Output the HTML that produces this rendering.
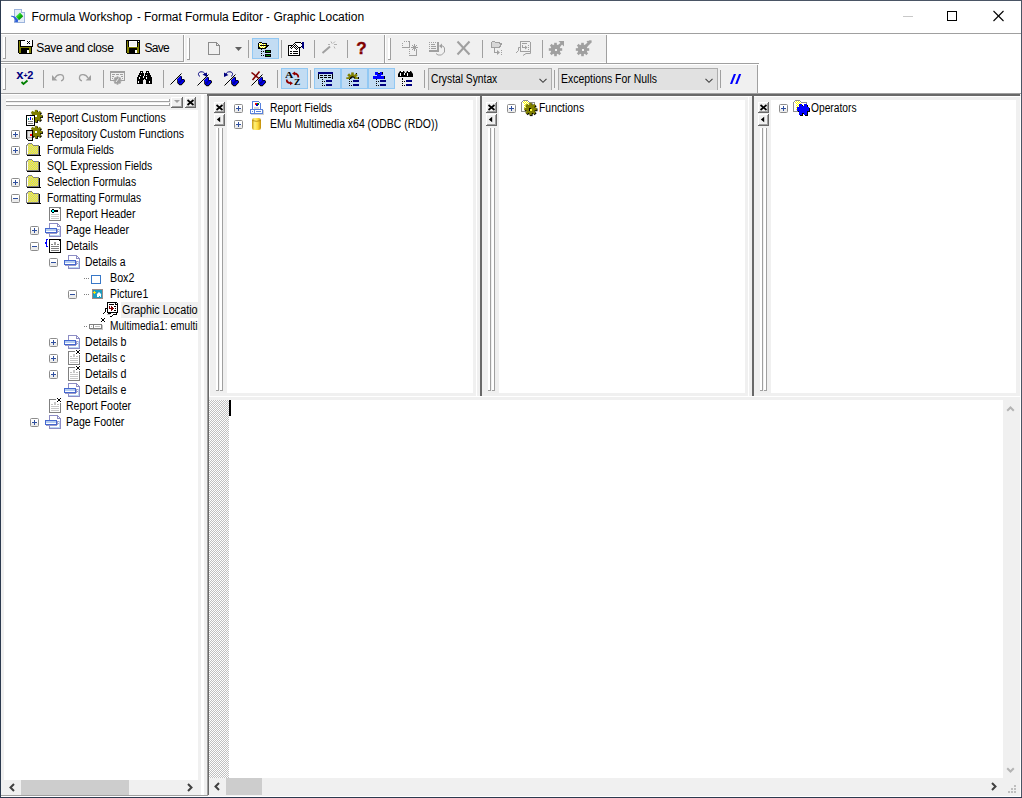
<!DOCTYPE html>
<html><head><meta charset="utf-8"><title>Formula Workshop</title>
<style>
*{box-sizing:border-box;margin:0;padding:0}
html,body{width:1022px;height:798px;overflow:hidden;background:#fff}
body{position:relative;font-family:"Liberation Sans",sans-serif;font-size:11px;color:#000}
.a{position:absolute}
.t{position:absolute;white-space:nowrap;line-height:16px;height:16px}
.g{background:#f0f0f0}
.w{background:#fff}
.d{background:#696969}
.m{background:#a0a0a0}
svg{position:absolute;overflow:visible;shape-rendering:crispEdges}
</style></head><body>
<div class="a w" style="left:0px;top:0px;width:1022px;height:33px;"></div>
<div class="t" style="left:31.50px;top:9px;font-size:12px;letter-spacing:-0.013px;">Formula Workshop</div>
<div class="t" style="left:144.10px;top:9px;font-size:12px;letter-spacing:-0.060px;">Format Formula Editor</div>
<div class="t" style="left:136.60px;top:9px;font-size:12px;transform:scaleX(0.9500);transform-origin:0 0;">-</div>
<div class="t" style="left:266.40px;top:9px;font-size:12px;transform:scaleX(0.9250);transform-origin:0 0;">-</div>
<div class="t" style="left:273.50px;top:9px;font-size:12px;letter-spacing:-0.007px;">Graphic Location</div>
<div class="a m" style="left:1px;top:33px;width:1020px;height:1px;"></div>
<div class="a g" style="left:1px;top:34px;width:605px;height:29px;"></div>
<div class="a g" style="left:1px;top:63px;width:756px;height:30px;"></div>
<div class="a w" style="left:1px;top:34px;width:1020px;height:1px;"></div>
<div class="a m" style="left:1px;top:61px;width:183px;height:1px;"></div>
<div class="a w" style="left:1px;top:62px;width:183px;height:1px;"></div>
<div class="a m" style="left:183px;top:35px;width:1px;height:27px;"></div>
<div class="a w" style="left:184px;top:35px;width:1px;height:28px;"></div>
<div class="a w" style="left:185px;top:62px;width:421px;height:1px;"></div>
<div class="a m" style="left:384px;top:35px;width:1px;height:28px;"></div>
<div class="a w" style="left:385px;top:35px;width:1px;height:28px;"></div>
<div class="a m" style="left:606px;top:35px;width:1px;height:29px;"></div>
<div class="a m" style="left:1px;top:63px;width:758px;height:1px;"></div>
<div class="a w" style="left:1px;top:64px;width:756px;height:1px;"></div>
<div class="a m" style="left:757px;top:65px;width:1px;height:28px;"></div>
<div class="a m" style="left:1px;top:93px;width:1020px;height:1px;"></div>
<div class="a w" style="left:1px;top:94px;width:206px;height:1px;"></div>
<div class="a w" style="left:3px;top:37px;width:2px;height:22px;"></div>
<div class="a m" style="left:5px;top:37px;width:1px;height:22px;"></div>
<div class="a m" style="left:3px;top:58px;width:3px;height:1px;"></div>
<div class="a w" style="left:187px;top:38px;width:2px;height:22px;"></div>
<div class="a m" style="left:189px;top:38px;width:1px;height:22px;"></div>
<div class="a m" style="left:187px;top:59px;width:3px;height:1px;"></div>
<div class="a w" style="left:388px;top:38px;width:2px;height:22px;"></div>
<div class="a m" style="left:390px;top:38px;width:1px;height:22px;"></div>
<div class="a m" style="left:388px;top:59px;width:3px;height:1px;"></div>
<div class="a w" style="left:3px;top:68px;width:2px;height:22px;"></div>
<div class="a m" style="left:5px;top:68px;width:1px;height:22px;"></div>
<div class="a m" style="left:3px;top:89px;width:3px;height:1px;"></div>
<div class="a m" style="left:248px;top:40px;width:1px;height:18px;"></div>
<div class="a m" style="left:281px;top:40px;width:1px;height:18px;"></div>
<div class="a m" style="left:314px;top:40px;width:1px;height:18px;"></div>
<div class="a m" style="left:347px;top:40px;width:1px;height:18px;"></div>
<div class="a m" style="left:482px;top:40px;width:1px;height:18px;"></div>
<div class="a m" style="left:542px;top:40px;width:1px;height:18px;"></div>
<div class="a m" style="left:43px;top:70px;width:1px;height:18px;"></div>
<div class="a m" style="left:103px;top:70px;width:1px;height:18px;"></div>
<div class="a m" style="left:163px;top:70px;width:1px;height:18px;"></div>
<div class="a m" style="left:277px;top:70px;width:1px;height:18px;"></div>
<div class="a m" style="left:310px;top:70px;width:1px;height:18px;"></div>
<div class="a m" style="left:424px;top:70px;width:1px;height:18px;"></div>
<div class="a m" style="left:554px;top:70px;width:1px;height:18px;"></div>
<div class="a m" style="left:720px;top:70px;width:1px;height:18px;"></div>
<div class="a " style="left:252px;top:38px;width:27px;height:21px;background:#c2dcf3;border:1px solid #92c8f3"></div>
<div class="a " style="left:281px;top:68px;width:27px;height:21px;background:#c2dcf3;border:1px solid #92c8f3"></div>
<div class="a " style="left:314px;top:68px;width:27px;height:21px;background:#c2dcf3;border:1px solid #92c8f3"></div>
<div class="a " style="left:341px;top:68px;width:27px;height:21px;background:#c2dcf3;border:1px solid #92c8f3"></div>
<div class="a " style="left:368px;top:68px;width:27px;height:21px;background:#c2dcf3;border:1px solid #92c8f3"></div>
<div class="t" style="left:36.30px;top:40px;font-size:12px;letter-spacing:-0.338px;">Save and close</div>
<div class="t" style="left:144.60px;top:40px;font-size:12px;letter-spacing:-0.767px;">Save</div>
<div class="a " style="left:428px;top:68px;width:124px;height:22px;background:#e1e1e1;border:1px solid #adadad;border-bottom:none"></div>
<div class="a " style="left:558px;top:68px;width:160px;height:22px;background:#e1e1e1;border:1px solid #adadad;border-bottom:none"></div>
<div class="t" style="left:431.14px;top:71px;font-size:12px;transform:scaleX(0.8566);transform-origin:0 0;">Crystal Syntax</div>
<div class="t" style="left:561.43px;top:71px;font-size:12px;transform:scaleX(0.8725);transform-origin:0 0;">Exceptions For Nulls</div>
<div class="a g" style="left:1px;top:95px;width:1020px;height:701px;"></div>
<div class="a w" style="left:4px;top:110px;width:194px;height:670px;"></div>
<div class="a w" style="left:201px;top:95px;width:3px;height:700px;"></div>
<div class="a m" style="left:207px;top:94px;width:1px;height:701px;"></div>
<div class="a d" style="left:208px;top:94px;width:1px;height:701px;"></div>
<div class="a d" style="left:207px;top:94px;width:813px;height:2px;"></div>
<div class="a w" style="left:209px;top:96px;width:1px;height:300px;"></div>
<div class="a w" style="left:209px;top:96px;width:811px;height:1px;"></div>
<div class="a w" style="left:476px;top:97px;width:1px;height:299px;"></div>
<div class="a w" style="left:748px;top:97px;width:1px;height:299px;"></div>
<div class="a w" style="left:227px;top:100px;width:246px;height:293px;"></div>
<div class="a w" style="left:499px;top:100px;width:246px;height:293px;"></div>
<div class="a w" style="left:771px;top:100px;width:245px;height:293px;"></div>
<div class="a d" style="left:480px;top:96px;width:2px;height:300px;"></div>
<div class="a d" style="left:752px;top:96px;width:2px;height:300px;"></div>
<div class="a w" style="left:209px;top:396px;width:811px;height:1px;"></div>
<div class="t" style="left:269.73px;top:100px;font-size:12px;transform:scaleX(0.8700);transform-origin:0 0;">Report Fields</div>
<div class="t" style="left:269.73px;top:116px;font-size:12px;transform:scaleX(0.8712);transform-origin:0 0;">EMu Multimedia x64 (ODBC (RDO))</div>
<div class="t" style="left:538.93px;top:100px;font-size:12px;transform:scaleX(0.8667);transform-origin:0 0;">Functions</div>
<div class="t" style="left:810.80px;top:100px;font-size:12px;transform:scaleX(0.8528);transform-origin:0 0;">Operators</div>
<div class="a w" style="left:209px;top:400px;width:794px;height:378px;"></div>
<div class="a " style="left:209px;top:400px;width:20px;height:378px;background:conic-gradient(#fff 25%,#c0c0c0 0 50%,#fff 0 75%,#c0c0c0 0) 0 0/2px 2px"></div>
<div class="a " style="left:229px;top:400px;width:2px;height:16px;background:#000"></div>
<div class="a" style="left:0;top:110px;width:198px;height:670px;overflow:hidden">
<div class="a g" style="left:121px;top:192px;width:77px;height:16px;"></div>
<div class="t" style="left:46.63px;top:0px;font-size:12px;transform:scaleX(0.8719);transform-origin:0 0;">Report Custom Functions</div>
<div class="t" style="left:46.63px;top:16px;font-size:12px;transform:scaleX(0.8699);transform-origin:0 0;">Repository Custom Functions</div>
<div class="t" style="left:46.66px;top:32px;font-size:12px;transform:scaleX(0.8423);transform-origin:0 0;">Formula Fields</div>
<div class="t" style="left:46.63px;top:48px;font-size:12px;transform:scaleX(0.8658);transform-origin:0 0;">SQL Expression Fields</div>
<div class="t" style="left:46.63px;top:64px;font-size:12px;transform:scaleX(0.8673);transform-origin:0 0;">Selection Formulas</div>
<div class="t" style="left:46.65px;top:80px;font-size:12px;transform:scaleX(0.8505);transform-origin:0 0;">Formatting Formulas</div>
<div class="t" style="left:65.72px;top:96px;font-size:12px;transform:scaleX(0.8833);transform-origin:0 0;">Report Header</div>
<div class="t" style="left:65.71px;top:112px;font-size:12px;transform:scaleX(0.8900);transform-origin:0 0;">Page Header</div>
<div class="t" style="left:65.73px;top:128px;font-size:12px;transform:scaleX(0.8714);transform-origin:0 0;">Details</div>
<div class="t" style="left:84.53px;top:144px;font-size:12px;transform:scaleX(0.8674);transform-origin:0 0;">Details a</div>
<div class="t" style="left:109.81px;top:160px;font-size:12px;transform:scaleX(0.8923);transform-origin:0 0;">Box2</div>
<div class="t" style="left:109.83px;top:176px;font-size:12px;transform:scaleX(0.8674);transform-origin:0 0;">Picture1</div>
<div class="t" style="left:121.70px;top:192px;font-size:12px;transform:scaleX(0.8988);transform-origin:0 0;">Graphic Location</div>
<div class="t" style="left:110.35px;top:208px;font-size:12px;transform:scaleX(0.8471);transform-origin:0 0;">Multimedia1: emultimedia.Multimedia</div>
<div class="t" style="left:84.51px;top:224px;font-size:12px;transform:scaleX(0.8867);transform-origin:0 0;">Details b</div>
<div class="t" style="left:84.52px;top:240px;font-size:12px;transform:scaleX(0.8778);transform-origin:0 0;">Details c</div>
<div class="t" style="left:84.51px;top:256px;font-size:12px;transform:scaleX(0.8867);transform-origin:0 0;">Details d</div>
<div class="t" style="left:84.51px;top:272px;font-size:12px;transform:scaleX(0.8867);transform-origin:0 0;">Details e</div>
<div class="t" style="left:65.62px;top:288px;font-size:12px;transform:scaleX(0.8795);transform-origin:0 0;">Report Footer</div>
<div class="t" style="left:65.62px;top:304px;font-size:12px;transform:scaleX(0.8831);transform-origin:0 0;">Page Footer</div>
</div>
<div class="a " style="left:0px;top:0px;width:1022px;height:1px;background:#4a5565"></div>
<div class="a " style="left:0px;top:0px;width:1px;height:798px;background:#2c3a4f"></div>
<div class="a " style="left:1021px;top:0px;width:1px;height:798px;background:#4a5565"></div>
<div class="a " style="left:0px;top:797px;width:1022px;height:1px;background:#2c3a4f"></div>
<div class="a w" style="left:1px;top:796px;width:1020px;height:1px;"></div>
<div class="a w" style="left:1020px;top:96px;width:1px;height:700px;"></div>
<div class="a m" style="left:1px;top:795px;width:207px;height:1px;"></div>
<div class="t" style="left:356px;top:39px;width:11px;text-align:center;font-size:17px;line-height:20px;height:20px;font-weight:bold;color:#800000;-webkit-text-stroke:0.4px #800000">?</div>
<div class="t" style="left:16.3px;top:67px;font-size:11px;font-weight:bold;color:#000080;letter-spacing:0;line-height:16px"><span style="font-size:13px">x</span><span style="font-size:7px;vertical-align:1.5px;letter-spacing:-0.5px">+</span>2</div>
<div class="t" style="left:285.2px;top:70.3px;font-family:'Liberation Serif',serif;font-weight:bold;font-size:8.5px;line-height:10px;height:10px;transform:scaleX(1.35);transform-origin:0 0">A</div>
<div class="t" style="left:294px;top:76.7px;font-family:'Liberation Serif',serif;font-weight:bold;font-size:8.5px;line-height:10px;height:10px;transform:scaleX(1.12);transform-origin:0 0">Z</div>
<svg width="1022" height="798" viewBox="0 0 1022 798" style="left:0;top:0">
<defs><clipPath id="hc"><rect x="345" y="71" width="15" height="8"/></clipPath><pattern id="ck" width="2" height="2" patternUnits="userSpaceOnUse"><rect width="2" height="2" fill="#ffff00"/><rect x="0" y="0" width="1" height="1" fill="#c0c0c0"/><rect x="1" y="1" width="1" height="1" fill="#c0c0c0"/></pattern><pattern id="ckk" width="2" height="2" patternUnits="userSpaceOnUse"><rect width="2" height="2" fill="#fff"/><rect x="0" y="0" width="1" height="1" fill="#000"/><rect x="1" y="1" width="1" height="1" fill="#000"/></pattern><pattern id="ckw" width="2" height="2" patternUnits="userSpaceOnUse"><rect width="2" height="2" fill="#ffff00"/><rect x="0" y="0" width="1" height="1" fill="#fff"/><rect x="1" y="1" width="1" height="1" fill="#fff"/></pattern><linearGradient id="grn" x1="0" y1="0" x2="1" y2="1"><stop offset="0.2" stop-color="#58e858"/><stop offset="0.5" stop-color="#10c010"/><stop offset="0.9" stop-color="#007800"/></linearGradient><linearGradient id="gold" x1="0" x2="1"><stop offset="0" stop-color="#c89810"/><stop offset="0.3" stop-color="#fff27a"/><stop offset="0.65" stop-color="#ffd93a"/><stop offset="1" stop-color="#c08c08"/></linearGradient></defs>
<polyline points="539.5,78.8 543,82.3 546.5,78.8" fill="none" stroke="#404040" stroke-width="1.1" shape-rendering="geometricPrecision"/>
<polyline points="705.5,78.8 709,82.3 712.5,78.8" fill="none" stroke="#404040" stroke-width="1.1" shape-rendering="geometricPrecision"/>
<rect x="126" y="40" width="14" height="14" fill="#000"/>
<rect x="126" y="53" width="1" height="1" fill="#f0f0f0"/>
<rect x="127" y="41" width="1" height="12" fill="#808000"/>
<rect x="128" y="47" width="1" height="6" fill="#808000"/>
<rect x="127" y="47" width="12" height="1" fill="#808000"/>
<rect x="138" y="43" width="1" height="10" fill="#808000"/>
<rect x="137" y="47" width="1" height="6" fill="#808000"/>
<rect x="129" y="41" width="8" height="6" fill="#fff"/>
<rect x="130" y="42" width="6" height="4" fill="#f0f0f0"/>
<rect x="138" y="41" width="1" height="1" fill="#fff"/>
<rect x="135" y="50" width="2" height="3" fill="#fff"/>
<rect x="18" y="40" width="15" height="14" fill="#000"/>
<rect x="18" y="53" width="1" height="1" fill="#f0f0f0"/>
<rect x="19" y="41" width="1" height="12" fill="#808000"/>
<rect x="20" y="47" width="1" height="6" fill="#808000"/>
<rect x="19" y="47" width="12" height="1" fill="#808000"/>
<rect x="30" y="47" width="1" height="6" fill="#808000"/>
<rect x="29" y="47" width="1" height="6" fill="#808000"/>
<rect x="32" y="47" width="1" height="7" fill="#f0f0f0"/>
<rect x="21" y="41" width="4" height="5" fill="#fff"/>
<rect x="25" y="40" width="7" height="6" fill="#fff"/>
<rect x="31" y="46" width="2" height="1" fill="#000"/>
<rect x="27" y="50" width="2" height="3" fill="#fff"/>
<polyline points="27,41 30,44" fill="none" stroke="#000" stroke-width="1" shape-rendering="geometricPrecision"/>
<polyline points="30,41 27,44" fill="none" stroke="#000" stroke-width="1" shape-rendering="geometricPrecision"/>
<rect x="27" y="41" width="1" height="1" fill="#000"/>
<rect x="29" y="41" width="1" height="1" fill="#000"/>
<rect x="28" y="42" width="1" height="1" fill="#000"/>
<rect x="27" y="43" width="1" height="1" fill="#000"/>
<rect x="29" y="43" width="1" height="1" fill="#000"/>
<path d="M208.5,42.5 H216.5 L219.5,45.5 V54.5 H208.5 Z" fill="none" stroke="#8c8c8c" stroke-width="1" />
<path d="M216.5,42.5 V45.5 H219.5" fill="none" stroke="#8c8c8c" stroke-width="1" />
<polygon points="235,47 242,47 238.5,51" fill="#606060" shape-rendering="geometricPrecision"/>
<rect x="259" y="43" width="3" height="1" fill="url(#ckw)"/>
<rect x="259" y="44" width="7" height="1" fill="url(#ckw)"/>
<rect x="259" y="45" width="1" height="1" fill="url(#ckw)"/>
<rect x="259" y="46" width="7" height="1" fill="url(#ckw)"/>
<rect x="259" y="47" width="6" height="1" fill="url(#ckw)"/>
<rect x="259" y="42" width="3" height="1" fill="#000"/>
<rect x="258" y="43" width="1" height="6" fill="#000"/>
<rect x="262" y="43" width="5" height="1" fill="#000"/>
<rect x="266" y="44" width="1" height="1" fill="#000"/>
<rect x="260" y="45" width="9" height="1" fill="#000"/>
<rect x="266" y="46" width="2" height="1" fill="#000"/>
<rect x="265" y="47" width="2" height="1" fill="#000"/>
<rect x="258" y="48" width="8" height="1" fill="#000"/>
<rect x="261" y="49" width="1" height="1" fill="#000"/>
<rect x="259" y="47" width="1" height="1" fill="#000"/>
<rect x="261" y="51" width="1" height="1" fill="#000"/>
<rect x="261" y="53" width="1" height="1" fill="#000"/>
<rect x="261" y="55" width="1" height="1" fill="#000"/>
<rect x="263" y="51" width="1" height="1" fill="#000"/>
<rect x="263" y="55" width="1" height="1" fill="#000"/>
<rect x="265" y="50" width="6" height="3" fill="#000"/>
<rect x="266" y="51" width="4" height="1" fill="#008000"/>
<rect x="265" y="54" width="6" height="3" fill="#000"/>
<rect x="266" y="55" width="4" height="1" fill="#008000"/>
<rect x="288" y="45" width="12" height="11" fill="#000"/>
<rect x="289" y="46" width="10" height="9" fill="#fff"/>
<rect x="290" y="51" width="2" height="1" fill="#000"/>
<rect x="293" y="51" width="5" height="1" fill="#000"/>
<rect x="290" y="53" width="2" height="1" fill="#000"/>
<rect x="293" y="53" width="5" height="1" fill="#000"/>
<rect x="294" y="43" width="1" height="1" fill="#fff"/>
<rect x="294" y="43" width="1" height="1" fill="#000"/>
<rect x="293" y="44" width="3" height="1" fill="#fff"/>
<rect x="293" y="44" width="1" height="1" fill="#000"/>
<rect x="295" y="44" width="1" height="1" fill="#000"/>
<rect x="292" y="45" width="5" height="1" fill="#fff"/>
<rect x="292" y="45" width="1" height="1" fill="#000"/>
<rect x="294" y="45" width="1" height="1" fill="#000"/>
<rect x="296" y="45" width="1" height="1" fill="#000"/>
<rect x="291" y="46" width="7" height="1" fill="#fff"/>
<rect x="291" y="46" width="1" height="1" fill="#000"/>
<rect x="293" y="46" width="1" height="1" fill="#000"/>
<rect x="295" y="46" width="1" height="1" fill="#000"/>
<rect x="297" y="46" width="1" height="1" fill="#000"/>
<rect x="290" y="47" width="9" height="1" fill="#fff"/>
<rect x="290" y="47" width="1" height="1" fill="#000"/>
<rect x="292" y="47" width="1" height="1" fill="#000"/>
<rect x="294" y="47" width="1" height="1" fill="#000"/>
<rect x="296" y="47" width="1" height="1" fill="#000"/>
<rect x="298" y="47" width="1" height="1" fill="#000"/>
<rect x="294" y="48" width="4" height="1" fill="#fff"/>
<rect x="295" y="49" width="3" height="1" fill="#fff"/>
<rect x="291" y="48" width="1" height="1" fill="#000"/>
<rect x="295" y="48" width="1" height="1" fill="#000"/>
<rect x="297" y="48" width="1" height="1" fill="#000"/>
<rect x="296" y="49" width="1" height="1" fill="#000"/>
<rect x="296" y="43" width="6" height="4" fill="#fff"/>
<rect x="295" y="44" width="1" height="1" fill="#000"/>
<rect x="296" y="45" width="1" height="1" fill="#000"/>
<rect x="295" y="46" width="1" height="1" fill="#000"/>
<rect x="297" y="46" width="1" height="1" fill="#000"/>
<rect x="295" y="42" width="6" height="1" fill="#000"/>
<rect x="298" y="47" width="3" height="1" fill="#000"/>
<rect x="301" y="43" width="1" height="1" fill="#000"/>
<rect x="301" y="46" width="1" height="1" fill="#000"/>
<rect x="302" y="42" width="2" height="6" fill="#000080"/>
<rect x="303" y="48" width="1" height="1" fill="#000080"/>
<polyline points="322.5,53 330,46.5" fill="none" stroke="#a0a0a0" stroke-width="2" shape-rendering="geometricPrecision"/>
<polyline points="331,41.5 332,43.5" fill="none" stroke="#b0b0b0" stroke-width="1" shape-rendering="geometricPrecision"/>
<polyline points="335,41.5 333,43.5" fill="none" stroke="#b0b0b0" stroke-width="1" shape-rendering="geometricPrecision"/>
<polyline points="328,44.5 330,44.5" fill="none" stroke="#b0b0b0" stroke-width="1" shape-rendering="geometricPrecision"/>
<polyline points="334,44.5 337,44.5" fill="none" stroke="#b0b0b0" stroke-width="1" shape-rendering="geometricPrecision"/>
<polyline points="334,46.5 335,48.5" fill="none" stroke="#b0b0b0" stroke-width="1" shape-rendering="geometricPrecision"/>
<polyline points="331.5,46.5 331.5,46.5" fill="none" stroke="#b0b0b0" stroke-width="1" shape-rendering="geometricPrecision"/>
<rect x="404" y="41" width="1" height="1" fill="#a0a0a0"/>
<rect x="406" y="41" width="1" height="1" fill="#a0a0a0"/>
<rect x="408" y="41" width="1" height="1" fill="#a0a0a0"/>
<rect x="402" y="43" width="1" height="1" fill="#a0a0a0"/>
<rect x="402" y="45" width="1" height="1" fill="#a0a0a0"/>
<rect x="402" y="47" width="8" height="1" fill="#a0a0a0"/>
<rect x="409" y="41" width="1" height="7" fill="#a0a0a0"/>
<rect x="409" y="49" width="1" height="1" fill="#a0a0a0"/>
<rect x="409" y="51" width="1" height="1" fill="#a0a0a0"/>
<rect x="409" y="53" width="1" height="1" fill="#a0a0a0"/>
<rect x="409" y="55" width="8" height="1" fill="#a0a0a0"/>
<rect x="416" y="49" width="1" height="7" fill="#a0a0a0"/>
<rect x="414" y="44" width="1" height="7" fill="#a0a0a0"/>
<rect x="411" y="47" width="7" height="1" fill="#a0a0a0"/>
<polyline points="412,45 417,50" fill="none" stroke="#a0a0a0" stroke-width="1" shape-rendering="geometricPrecision"/>
<polyline points="417,45 412,50" fill="none" stroke="#a0a0a0" stroke-width="1" shape-rendering="geometricPrecision"/>
<rect x="429" y="42" width="1" height="1" fill="#a0a0a0"/>
<rect x="431" y="42" width="1" height="1" fill="#a0a0a0"/>
<rect x="433" y="42" width="1" height="1" fill="#a0a0a0"/>
<rect x="435" y="42" width="1" height="1" fill="#a0a0a0"/>
<rect x="429" y="44" width="1" height="1" fill="#a0a0a0"/>
<rect x="429" y="46" width="1" height="1" fill="#a0a0a0"/>
<rect x="429" y="48" width="1" height="1" fill="#a0a0a0"/>
<rect x="431" y="44" width="4" height="1" fill="#a0a0a0"/>
<rect x="431" y="46" width="5" height="1" fill="#a0a0a0"/>
<rect x="431" y="48" width="5" height="1" fill="#a0a0a0"/>
<rect x="437" y="42" width="2" height="10" fill="#a0a0a0"/>
<rect x="429" y="50" width="10" height="2" fill="#a0a0a0"/>
<path d="M440.5,46 L443,46 L444.5,48 V52 L441.5,55 H438 L436,53.5" fill="none" stroke="#a0a0a0" stroke-width="1" shape-rendering="geometricPrecision"/>
<polygon points="439,46 442,43.5 442,48.5" fill="#a0a0a0" shape-rendering="geometricPrecision"/>
<polyline points="457.5,41.5 469.5,54.5" fill="none" stroke="#a0a0a0" stroke-width="2" shape-rendering="geometricPrecision"/>
<polyline points="469.5,41.5 457.5,54.5" fill="none" stroke="#a0a0a0" stroke-width="2" shape-rendering="geometricPrecision"/>
<path d="M491.5,47.5 V42.5 L492.5,41.5 H494.5 L495.5,42.5 H499.5 V43.5 H501.5 L499.5,47.5 Z" fill="#d8d8d8" stroke="#a0a0a0" stroke-width="1" />
<polyline points="494.5,48 494.5,52.5 498,52.5" fill="none" stroke="#a0a0a0" stroke-width="1" />
<polygon points="497,50 500,52.5 497,55" fill="#a0a0a0" shape-rendering="geometricPrecision"/>
<rect x="501" y="50" width="1" height="1" fill="#a0a0a0"/>
<rect x="501" y="52" width="1" height="1" fill="#a0a0a0"/>
<rect x="501" y="54" width="1" height="1" fill="#a0a0a0"/>
<path d="M520.5,41.5 H529.5 L530.5,42.5 V51.5 H520.5 Z" fill="none" stroke="#a0a0a0" stroke-width="1" />
<rect x="522" y="43" width="5" height="1" fill="#a0a0a0"/>
<polyline points="522.5,45 522.5,47.5 525,47.5" fill="none" stroke="#a0a0a0" stroke-width="1" />
<polygon points="525,45.5 527.5,47.5 525,49.5" fill="#a0a0a0" shape-rendering="geometricPrecision"/>
<rect x="528" y="45" width="1" height="1" fill="#a0a0a0"/>
<rect x="528" y="47" width="1" height="1" fill="#a0a0a0"/>
<rect x="528" y="49" width="1" height="1" fill="#a0a0a0"/>
<polyline points="516,53 518.5,50.5 518.5,47.5 520,47.5" fill="none" stroke="#a0a0a0" stroke-width="1" shape-rendering="geometricPrecision"/>
<polyline points="530.5,52 530.5,53.5 526,53.5 523,55.5" fill="none" stroke="#a0a0a0" stroke-width="1" shape-rendering="geometricPrecision"/>
<circle cx="555.5" cy="49.5" r="4.9" fill="#a0a0a0" shape-rendering="geometricPrecision"/>
<rect x="554.2" y="42.800000000000004" width="2.6" height="2.9" fill="#a0a0a0" transform="rotate(0.0 555.5 49.5)" shape-rendering="geometricPrecision"/>
<rect x="554.2" y="42.800000000000004" width="2.6" height="2.9" fill="#a0a0a0" transform="rotate(45.0 555.5 49.5)" shape-rendering="geometricPrecision"/>
<rect x="554.2" y="42.800000000000004" width="2.6" height="2.9" fill="#a0a0a0" transform="rotate(90.0 555.5 49.5)" shape-rendering="geometricPrecision"/>
<rect x="554.2" y="42.800000000000004" width="2.6" height="2.9" fill="#a0a0a0" transform="rotate(135.0 555.5 49.5)" shape-rendering="geometricPrecision"/>
<rect x="554.2" y="42.800000000000004" width="2.6" height="2.9" fill="#a0a0a0" transform="rotate(180.0 555.5 49.5)" shape-rendering="geometricPrecision"/>
<rect x="554.2" y="42.800000000000004" width="2.6" height="2.9" fill="#a0a0a0" transform="rotate(225.0 555.5 49.5)" shape-rendering="geometricPrecision"/>
<rect x="554.2" y="42.800000000000004" width="2.6" height="2.9" fill="#a0a0a0" transform="rotate(270.0 555.5 49.5)" shape-rendering="geometricPrecision"/>
<rect x="554.2" y="42.800000000000004" width="2.6" height="2.9" fill="#a0a0a0" transform="rotate(315.0 555.5 49.5)" shape-rendering="geometricPrecision"/>
<rect x="554.5" y="48.5" width="2" height="2" fill="#f0f0f0"/>
<polyline points="558,47 563,42" fill="none" stroke="#a0a0a0" stroke-width="2.4" shape-rendering="geometricPrecision"/>
<polygon points="558.5,41 564,41 564,46.5" fill="#a0a0a0" shape-rendering="geometricPrecision"/>
<circle cx="582.5" cy="49.5" r="4.9" fill="#a0a0a0" shape-rendering="geometricPrecision"/>
<rect x="581.2" y="42.800000000000004" width="2.6" height="2.9" fill="#a0a0a0" transform="rotate(0.0 582.5 49.5)" shape-rendering="geometricPrecision"/>
<rect x="581.2" y="42.800000000000004" width="2.6" height="2.9" fill="#a0a0a0" transform="rotate(45.0 582.5 49.5)" shape-rendering="geometricPrecision"/>
<rect x="581.2" y="42.800000000000004" width="2.6" height="2.9" fill="#a0a0a0" transform="rotate(90.0 582.5 49.5)" shape-rendering="geometricPrecision"/>
<rect x="581.2" y="42.800000000000004" width="2.6" height="2.9" fill="#a0a0a0" transform="rotate(135.0 582.5 49.5)" shape-rendering="geometricPrecision"/>
<rect x="581.2" y="42.800000000000004" width="2.6" height="2.9" fill="#a0a0a0" transform="rotate(180.0 582.5 49.5)" shape-rendering="geometricPrecision"/>
<rect x="581.2" y="42.800000000000004" width="2.6" height="2.9" fill="#a0a0a0" transform="rotate(225.0 582.5 49.5)" shape-rendering="geometricPrecision"/>
<rect x="581.2" y="42.800000000000004" width="2.6" height="2.9" fill="#a0a0a0" transform="rotate(270.0 582.5 49.5)" shape-rendering="geometricPrecision"/>
<rect x="581.2" y="42.800000000000004" width="2.6" height="2.9" fill="#a0a0a0" transform="rotate(315.0 582.5 49.5)" shape-rendering="geometricPrecision"/>
<rect x="581.5" y="48.5" width="2" height="2" fill="#f0f0f0"/>
<polyline points="585,47 591,41" fill="none" stroke="#a0a0a0" stroke-width="2.8" shape-rendering="geometricPrecision"/>
<polygon points="586.5,41 592,40.5 589,44.5" fill="#a0a0a0" shape-rendering="geometricPrecision"/>
<polyline points="21.5,82 23.5,84 27.5,80.5" fill="none" stroke="#008000" stroke-width="1.8" shape-rendering="geometricPrecision"/>
<polygon points="52,75 52,80.4 57.4,80.4" fill="#a0a0a0" shape-rendering="geometricPrecision"/>
<path d="M55,78 C57,74 63,73.5 63.5,77 C63.8,79 62.5,80.5 61,80.8" fill="none" stroke="#a0a0a0" stroke-width="1.3" shape-rendering="geometricPrecision"/>
<polygon points="91,75 91,80.4 85.6,80.4" fill="#a0a0a0" shape-rendering="geometricPrecision"/>
<path d="M88,78 C86,74 80,73.5 79.5,77 C79.2,79 80.5,80.5 82,80.8" fill="none" stroke="#a0a0a0" stroke-width="1.3" shape-rendering="geometricPrecision"/>
<rect x="110" y="71" width="15" height="2" fill="#a0a0a0"/>
<rect x="110" y="71" width="1" height="10" fill="#a0a0a0"/>
<rect x="124" y="71" width="1" height="10" fill="#a0a0a0"/>
<rect x="110" y="80" width="4" height="1" fill="#a0a0a0"/>
<rect x="121" y="80" width="4" height="1" fill="#a0a0a0"/>
<rect x="112" y="74" width="3" height="1" fill="#a0a0a0"/>
<rect x="116" y="74" width="3" height="1" fill="#a0a0a0"/>
<rect x="120" y="74" width="3" height="1" fill="#a0a0a0"/>
<rect x="112" y="76" width="2" height="1" fill="#a0a0a0"/>
<rect x="121" y="76" width="2" height="1" fill="#a0a0a0"/>
<rect x="112" y="78" width="1" height="1" fill="#a0a0a0"/>
<rect x="122" y="78" width="1" height="1" fill="#a0a0a0"/>
<circle cx="117.5" cy="80.5" r="3.2" fill="#a0a0a0" shape-rendering="geometricPrecision"/>
<rect x="116.6" y="76.3" width="1.8" height="2.1" fill="#a0a0a0" transform="rotate(0.0 117.5 80.5)" shape-rendering="geometricPrecision"/>
<rect x="116.6" y="76.3" width="1.8" height="2.1" fill="#a0a0a0" transform="rotate(45.0 117.5 80.5)" shape-rendering="geometricPrecision"/>
<rect x="116.6" y="76.3" width="1.8" height="2.1" fill="#a0a0a0" transform="rotate(90.0 117.5 80.5)" shape-rendering="geometricPrecision"/>
<rect x="116.6" y="76.3" width="1.8" height="2.1" fill="#a0a0a0" transform="rotate(135.0 117.5 80.5)" shape-rendering="geometricPrecision"/>
<rect x="116.6" y="76.3" width="1.8" height="2.1" fill="#a0a0a0" transform="rotate(180.0 117.5 80.5)" shape-rendering="geometricPrecision"/>
<rect x="116.6" y="76.3" width="1.8" height="2.1" fill="#a0a0a0" transform="rotate(225.0 117.5 80.5)" shape-rendering="geometricPrecision"/>
<rect x="116.6" y="76.3" width="1.8" height="2.1" fill="#a0a0a0" transform="rotate(270.0 117.5 80.5)" shape-rendering="geometricPrecision"/>
<rect x="116.6" y="76.3" width="1.8" height="2.1" fill="#a0a0a0" transform="rotate(315.0 117.5 80.5)" shape-rendering="geometricPrecision"/>
<polyline points="116,82 118.5,78.5" fill="none" stroke="#f0f0f0" stroke-width="1" shape-rendering="geometricPrecision"/>
<rect x="140" y="71" width="3" height="2" fill="#000"/>
<rect x="146" y="71" width="3" height="2" fill="#000"/>
<rect x="139" y="73" width="5" height="2" fill="#000"/>
<rect x="145" y="73" width="5" height="2" fill="#000"/>
<rect x="138" y="75" width="6" height="2" fill="#000"/>
<rect x="145" y="75" width="6" height="2" fill="#000"/>
<rect x="137" y="77" width="15" height="3" fill="#000"/>
<rect x="144" y="76" width="1" height="1" fill="#000"/>
<rect x="137" y="80" width="6" height="4" fill="#000"/>
<rect x="146" y="80" width="6" height="4" fill="#000"/>
<rect x="141" y="72" width="1" height="1" fill="#fff"/>
<rect x="147" y="72" width="1" height="1" fill="#fff"/>
<rect x="140" y="75" width="1" height="1" fill="#fff"/>
<rect x="146" y="75" width="1" height="1" fill="#fff"/>
<rect x="139" y="77" width="1" height="2" fill="#fff"/>
<rect x="143" y="76" width="1" height="2" fill="#fff"/>
<rect x="146" y="77" width="1" height="2" fill="#fff"/>
<rect x="138" y="81" width="1" height="2" fill="#fff"/>
<rect x="149" y="81" width="1" height="2" fill="#fff"/>
<rect x="144" y="79" width="1" height="1" fill="#f0f0f0"/>
<polyline points="170.5,84.5 181.5,73.5" fill="none" stroke="#000" stroke-width="1" shape-rendering="geometricPrecision"/>
<polygon points="176.8,79.5 180.3,75.8 182,76.5 182,79 184,79 185,80.5 185,81.5 181.5,85.2 179.5,85.2 177.2,83 177.2,80" fill="#000" shape-rendering="geometricPrecision"/>
<polygon points="177,79.5 180.5,76.2 181.2,76.8 181.2,79.7 183.7,79.7 184.2,81 181.2,84.3 179.9,84.3 178,82.5 178,80.3" fill="#0000ff" shape-rendering="geometricPrecision"/>
<polygon points="178.2,81.4 181,79.8 182.8,80 180,83.4 178.6,82.6" fill="#0000a0" shape-rendering="geometricPrecision"/>
<polyline points="197.5,85.5 208.5,74.5" fill="none" stroke="#000" stroke-width="1" shape-rendering="geometricPrecision"/>
<polygon points="203.8,80.5 207.3,76.8 209,77.5 209,80 211,80 212,81.5 212,82.5 208.5,86.2 206.5,86.2 204.2,84 204.2,81" fill="#000" shape-rendering="geometricPrecision"/>
<polygon points="204,80.5 207.5,77.2 208.2,77.8 208.2,80.7 210.7,80.7 211.2,82 208.2,85.3 206.9,85.3 205,83.5 205,81.3" fill="#0000ff" shape-rendering="geometricPrecision"/>
<polygon points="205.2,82.4 208,80.8 209.8,81 207,84.4 205.6,83.6" fill="#0000a0" shape-rendering="geometricPrecision"/>
<polyline points="224.5,85.5 235.5,74.5" fill="none" stroke="#000" stroke-width="1" shape-rendering="geometricPrecision"/>
<polygon points="230.8,80.5 234.3,76.8 236,77.5 236,80 238,80 239,81.5 239,82.5 235.5,86.2 233.5,86.2 231.2,84 231.2,81" fill="#000" shape-rendering="geometricPrecision"/>
<polygon points="231,80.5 234.5,77.2 235.2,77.8 235.2,80.7 237.7,80.7 238.2,82 235.2,85.3 233.9,85.3 232,83.5 232,81.3" fill="#0000ff" shape-rendering="geometricPrecision"/>
<polygon points="232.2,82.4 235,80.8 236.8,81 234,84.4 232.6,83.6" fill="#0000a0" shape-rendering="geometricPrecision"/>
<polyline points="251.5,85.5 262.5,74.5" fill="none" stroke="#000" stroke-width="1" shape-rendering="geometricPrecision"/>
<polygon points="257.8,80.5 261.3,76.8 263,77.5 263,80 265,80 266,81.5 266,82.5 262.5,86.2 260.5,86.2 258.2,84 258.2,81" fill="#000" shape-rendering="geometricPrecision"/>
<polygon points="258,80.5 261.5,77.2 262.2,77.8 262.2,80.7 264.7,80.7 265.2,82 262.2,85.3 260.9,85.3 259,83.5 259,81.3" fill="#0000ff" shape-rendering="geometricPrecision"/>
<polygon points="259.2,82.4 262,80.8 263.8,81 261,84.4 259.6,83.6" fill="#0000a0" shape-rendering="geometricPrecision"/>
<path d="M200,76.5 C197.5,75 198,72 201,71.8 C203,71.7 204.5,72.5 205,74" fill="none" stroke="#000080" stroke-width="1" shape-rendering="geometricPrecision"/>
<polygon points="202.5,74.5 207,72.5 207,77" fill="#000080" shape-rendering="geometricPrecision"/>
<path d="M231,76.5 C233.5,75 233,72 230,71.8 C228,71.7 226.5,72.5 226,74" fill="none" stroke="#000080" stroke-width="1" shape-rendering="geometricPrecision"/>
<polygon points="228.5,75 224,72.5 224,77" fill="#000080" shape-rendering="geometricPrecision"/>
<polyline points="251.5,72.5 259,78.5" fill="none" stroke="#800000" stroke-width="1.6" shape-rendering="geometricPrecision"/>
<polyline points="259.5,71.5 252.5,80" fill="none" stroke="#800000" stroke-width="1.6" shape-rendering="geometricPrecision"/>
<path d="M294,73.5 C297,73.5 298.5,75 298.3,77.5" fill="none" stroke="#900000" stroke-width="1.8" shape-rendering="geometricPrecision"/>
<polygon points="292,73.5 295,71.5 295,75.5" fill="#900000" shape-rendering="geometricPrecision"/>
<path d="M286.7,79.5 C286.7,82 288.5,83.2 291,83.2" fill="none" stroke="#900000" stroke-width="1.8" shape-rendering="geometricPrecision"/>
<polygon points="293,83.2 290,81.2 290,85.2" fill="#900000" shape-rendering="geometricPrecision"/>
<rect x="318" y="72" width="15" height="2" fill="#000080"/>
<rect x="318" y="74" width="1" height="5" fill="#000"/>
<rect x="332" y="74" width="1" height="5" fill="#000"/>
<rect x="320" y="75" width="3" height="1" fill="#000"/>
<rect x="320" y="77" width="3" height="1" fill="#000"/>
<rect x="324" y="75" width="3" height="1" fill="#000"/>
<rect x="324" y="77" width="3" height="1" fill="#000"/>
<rect x="328" y="75" width="3" height="1" fill="#000"/>
<rect x="328" y="77" width="3" height="1" fill="#000"/>
<rect x="322" y="79" width="1" height="1" fill="#000"/>
<rect x="322" y="81" width="1" height="1" fill="#000"/>
<rect x="322" y="83" width="1" height="1" fill="#000"/>
<rect x="322" y="85" width="1" height="1" fill="#000"/>
<rect x="324" y="81" width="1" height="1" fill="#000"/>
<rect x="324" y="85" width="1" height="1" fill="#000"/>
<rect x="326" y="80" width="6" height="2" fill="#000080"/>
<rect x="326" y="84" width="6" height="2" fill="#000080"/>
<g clip-path="url(#hc)">
<circle cx="352.5" cy="78.6" r="4.2" fill="#808000" shape-rendering="geometricPrecision"/>
<rect x="351.2" y="72.39999999999999" width="2.6" height="3.1" fill="#808000" transform="rotate(0.0 352.5 78.6)" shape-rendering="geometricPrecision"/>
<rect x="351.2" y="72.39999999999999" width="2.6" height="3.1" fill="#808000" transform="rotate(45.0 352.5 78.6)" shape-rendering="geometricPrecision"/>
<rect x="351.2" y="72.39999999999999" width="2.6" height="3.1" fill="#808000" transform="rotate(90.0 352.5 78.6)" shape-rendering="geometricPrecision"/>
<rect x="351.2" y="72.39999999999999" width="2.6" height="3.1" fill="#808000" transform="rotate(135.0 352.5 78.6)" shape-rendering="geometricPrecision"/>
<rect x="351.2" y="72.39999999999999" width="2.6" height="3.1" fill="#808000" transform="rotate(180.0 352.5 78.6)" shape-rendering="geometricPrecision"/>
<rect x="351.2" y="72.39999999999999" width="2.6" height="3.1" fill="#808000" transform="rotate(225.0 352.5 78.6)" shape-rendering="geometricPrecision"/>
<rect x="351.2" y="72.39999999999999" width="2.6" height="3.1" fill="#808000" transform="rotate(270.0 352.5 78.6)" shape-rendering="geometricPrecision"/>
<rect x="351.2" y="72.39999999999999" width="2.6" height="3.1" fill="#808000" transform="rotate(315.0 352.5 78.6)" shape-rendering="geometricPrecision"/>
<circle cx="352.5" cy="78.8" r="2.6" fill="#000" shape-rendering="geometricPrecision"/><circle cx="352.9" cy="79.2" r="1.7" fill="#c2dcf3" shape-rendering="geometricPrecision"/>
</g>
<rect x="358" y="77" width="1" height="2" fill="#000"/>
<rect x="356" y="73" width="1" height="1" fill="#000"/>
<rect x="349" y="79" width="1" height="1" fill="#000"/>
<rect x="349" y="81" width="1" height="1" fill="#000"/>
<rect x="349" y="83" width="1" height="1" fill="#000"/>
<rect x="349" y="85" width="1" height="1" fill="#000"/>
<rect x="351" y="81" width="1" height="1" fill="#000"/>
<rect x="351" y="85" width="1" height="1" fill="#000"/>
<rect x="353" y="80" width="6" height="2" fill="#000080"/>
<rect x="353" y="84" width="6" height="2" fill="#000080"/>
<path d="M373,76 h4 v-1 h-2 v-3 h3 v1 h2 v-1 h3 v3 h-2 v1 h4 v3 h-12 z" fill="#0000ff"/>
<rect x="384" y="76" width="1" height="3" fill="#000"/>
<rect x="382" y="72" width="1" height="2" fill="#000"/>
<rect x="378" y="73" width="2" height="1" fill="#000"/>
<rect x="376" y="79" width="1" height="1" fill="#000"/>
<rect x="376" y="81" width="1" height="1" fill="#000"/>
<rect x="376" y="83" width="1" height="1" fill="#000"/>
<rect x="376" y="85" width="1" height="1" fill="#000"/>
<rect x="378" y="81" width="1" height="1" fill="#000"/>
<rect x="378" y="85" width="1" height="1" fill="#000"/>
<rect x="380" y="80" width="6" height="2" fill="#000080"/>
<rect x="380" y="84" width="6" height="2" fill="#000080"/>
<path d="M398,77 v-3 l2,-3 h4 l1,2 h1 l1,-2 h4 l2,3 v3 z" fill="#000" stroke="none" stroke-width="1" shape-rendering="geometricPrecision"/>
<rect x="400" y="73" width="1" height="3" fill="#fff"/>
<rect x="404" y="73" width="1" height="2" fill="#fff"/>
<rect x="407" y="73" width="1" height="3" fill="#fff"/>
<rect x="401" y="71" width="2" height="1" fill="#fff"/>
<rect x="408" y="71" width="2" height="1" fill="#fff"/>
<rect x="402" y="79" width="1" height="1" fill="#000"/>
<rect x="402" y="81" width="1" height="1" fill="#000"/>
<rect x="402" y="83" width="1" height="1" fill="#000"/>
<rect x="402" y="85" width="1" height="1" fill="#000"/>
<rect x="404" y="81" width="1" height="1" fill="#000"/>
<rect x="404" y="85" width="1" height="1" fill="#000"/>
<rect x="406" y="80" width="6" height="2" fill="#000080"/>
<rect x="406" y="84" width="6" height="2" fill="#000080"/>
<rect x="402" y="78" width="1" height="1" fill="#000"/>
<polygon points="730,84 732.2,84 736,74 733.8,74" fill="#0000ff" shape-rendering="geometricPrecision"/>
<polygon points="735.2,84 737.4,84 741.2,74 739,74" fill="#0000ff" shape-rendering="geometricPrecision"/>
<rect x="171" y="97" width="12" height="11" fill="#696969"/>
<rect x="171" y="97" width="11" height="10" fill="#fff"/>
<rect x="172" y="98" width="10" height="9" fill="#a0a0a0"/>
<rect x="172" y="98" width="9" height="8" fill="#f0f0f0"/>
<polygon points="174,100 180,100 177,103" fill="#a0a0a0" shape-rendering="geometricPrecision"/>
<rect x="185" y="97" width="11" height="11" fill="#696969"/>
<rect x="185" y="97" width="10" height="10" fill="#fff"/>
<rect x="186" y="98" width="9" height="9" fill="#a0a0a0"/>
<rect x="186" y="98" width="8" height="8" fill="#f0f0f0"/>
<polyline points="187.5,100 193.5,105" fill="none" stroke="#000" stroke-width="1.7" shape-rendering="geometricPrecision"/>
<polyline points="193.5,100 187.5,105" fill="none" stroke="#000" stroke-width="1.7" shape-rendering="geometricPrecision"/>
<rect x="214" y="102" width="11" height="11" fill="#696969"/>
<rect x="214" y="102" width="10" height="10" fill="#fff"/>
<rect x="215" y="103" width="9" height="9" fill="#a0a0a0"/>
<rect x="215" y="103" width="8" height="8" fill="#f0f0f0"/>
<polyline points="216.5,105 222.5,110" fill="none" stroke="#000" stroke-width="1.7" shape-rendering="geometricPrecision"/>
<polyline points="222.5,105 216.5,110" fill="none" stroke="#000" stroke-width="1.7" shape-rendering="geometricPrecision"/>
<rect x="214" y="114" width="11" height="12" fill="#696969"/>
<rect x="214" y="114" width="10" height="11" fill="#fff"/>
<rect x="215" y="115" width="9" height="10" fill="#a0a0a0"/>
<rect x="215" y="115" width="8" height="9" fill="#f0f0f0"/>
<polygon points="220.2,116.8 220.2,122.2 216.8,119.5" fill="#000" shape-rendering="geometricPrecision"/>
<rect x="216" y="128" width="2" height="263" fill="#fff"/>
<rect x="218" y="128" width="1" height="263" fill="#a0a0a0"/>
<rect x="216" y="390" width="3" height="1" fill="#a0a0a0"/>
<rect x="220" y="128" width="2" height="263" fill="#fff"/>
<rect x="222" y="128" width="1" height="263" fill="#a0a0a0"/>
<rect x="220" y="390" width="3" height="1" fill="#a0a0a0"/>
<rect x="486" y="102" width="11" height="11" fill="#696969"/>
<rect x="486" y="102" width="10" height="10" fill="#fff"/>
<rect x="487" y="103" width="9" height="9" fill="#a0a0a0"/>
<rect x="487" y="103" width="8" height="8" fill="#f0f0f0"/>
<polyline points="488.5,105 494.5,110" fill="none" stroke="#000" stroke-width="1.7" shape-rendering="geometricPrecision"/>
<polyline points="494.5,105 488.5,110" fill="none" stroke="#000" stroke-width="1.7" shape-rendering="geometricPrecision"/>
<rect x="486" y="114" width="11" height="12" fill="#696969"/>
<rect x="486" y="114" width="10" height="11" fill="#fff"/>
<rect x="487" y="115" width="9" height="10" fill="#a0a0a0"/>
<rect x="487" y="115" width="8" height="9" fill="#f0f0f0"/>
<polygon points="492.2,116.8 492.2,122.2 488.8,119.5" fill="#000" shape-rendering="geometricPrecision"/>
<rect x="488" y="128" width="2" height="263" fill="#fff"/>
<rect x="490" y="128" width="1" height="263" fill="#a0a0a0"/>
<rect x="488" y="390" width="3" height="1" fill="#a0a0a0"/>
<rect x="492" y="128" width="2" height="263" fill="#fff"/>
<rect x="494" y="128" width="1" height="263" fill="#a0a0a0"/>
<rect x="492" y="390" width="3" height="1" fill="#a0a0a0"/>
<rect x="758" y="102" width="11" height="11" fill="#696969"/>
<rect x="758" y="102" width="10" height="10" fill="#fff"/>
<rect x="759" y="103" width="9" height="9" fill="#a0a0a0"/>
<rect x="759" y="103" width="8" height="8" fill="#f0f0f0"/>
<polyline points="760.5,105 766.5,110" fill="none" stroke="#000" stroke-width="1.7" shape-rendering="geometricPrecision"/>
<polyline points="766.5,105 760.5,110" fill="none" stroke="#000" stroke-width="1.7" shape-rendering="geometricPrecision"/>
<rect x="758" y="114" width="11" height="12" fill="#696969"/>
<rect x="758" y="114" width="10" height="11" fill="#fff"/>
<rect x="759" y="115" width="9" height="10" fill="#a0a0a0"/>
<rect x="759" y="115" width="8" height="9" fill="#f0f0f0"/>
<polygon points="764.2,116.8 764.2,122.2 760.8,119.5" fill="#000" shape-rendering="geometricPrecision"/>
<rect x="760" y="128" width="2" height="263" fill="#fff"/>
<rect x="762" y="128" width="1" height="263" fill="#a0a0a0"/>
<rect x="760" y="390" width="3" height="1" fill="#a0a0a0"/>
<rect x="764" y="128" width="2" height="263" fill="#fff"/>
<rect x="766" y="128" width="1" height="263" fill="#a0a0a0"/>
<rect x="764" y="390" width="3" height="1" fill="#a0a0a0"/>
<rect x="6" y="99" width="164" height="2" fill="#fff"/>
<rect x="6" y="101" width="164" height="1" fill="#a0a0a0"/>
<rect x="169" y="99" width="1" height="3" fill="#a0a0a0"/>
<rect x="6" y="103" width="164" height="2" fill="#fff"/>
<rect x="6" y="105" width="164" height="1" fill="#a0a0a0"/>
<rect x="169" y="103" width="1" height="3" fill="#a0a0a0"/>
<rect x="11.5" y="130.5" width="8" height="8" rx="1" fill="#fff" stroke="#8c8c8c" shape-rendering="geometricPrecision"/>
<rect x="12" y="135" width="7" height="3" fill="#ececec"/>
<rect x="13" y="134" width="5" height="1" fill="#2f4f9f"/>
<rect x="15" y="132" width="1" height="5" fill="#2f4f9f"/>
<rect x="11.5" y="146.5" width="8" height="8" rx="1" fill="#fff" stroke="#8c8c8c" shape-rendering="geometricPrecision"/>
<rect x="12" y="151" width="7" height="3" fill="#ececec"/>
<rect x="13" y="150" width="5" height="1" fill="#2f4f9f"/>
<rect x="15" y="148" width="1" height="5" fill="#2f4f9f"/>
<rect x="11.5" y="178.5" width="8" height="8" rx="1" fill="#fff" stroke="#8c8c8c" shape-rendering="geometricPrecision"/>
<rect x="12" y="183" width="7" height="3" fill="#ececec"/>
<rect x="13" y="182" width="5" height="1" fill="#2f4f9f"/>
<rect x="15" y="180" width="1" height="5" fill="#2f4f9f"/>
<rect x="11.5" y="194.5" width="8" height="8" rx="1" fill="#fff" stroke="#8c8c8c" shape-rendering="geometricPrecision"/>
<rect x="12" y="199" width="7" height="3" fill="#ececec"/>
<rect x="13" y="198" width="5" height="1" fill="#2f4f9f"/>
<rect x="30.5" y="226.5" width="8" height="8" rx="1" fill="#fff" stroke="#8c8c8c" shape-rendering="geometricPrecision"/>
<rect x="31" y="231" width="7" height="3" fill="#ececec"/>
<rect x="32" y="230" width="5" height="1" fill="#2f4f9f"/>
<rect x="34" y="228" width="1" height="5" fill="#2f4f9f"/>
<rect x="30.5" y="242.5" width="8" height="8" rx="1" fill="#fff" stroke="#8c8c8c" shape-rendering="geometricPrecision"/>
<rect x="31" y="247" width="7" height="3" fill="#ececec"/>
<rect x="32" y="246" width="5" height="1" fill="#2f4f9f"/>
<rect x="49.5" y="258.5" width="8" height="8" rx="1" fill="#fff" stroke="#8c8c8c" shape-rendering="geometricPrecision"/>
<rect x="50" y="263" width="7" height="3" fill="#ececec"/>
<rect x="51" y="262" width="5" height="1" fill="#2f4f9f"/>
<rect x="68.5" y="290.5" width="8" height="8" rx="1" fill="#fff" stroke="#8c8c8c" shape-rendering="geometricPrecision"/>
<rect x="69" y="295" width="7" height="3" fill="#ececec"/>
<rect x="70" y="294" width="5" height="1" fill="#2f4f9f"/>
<rect x="49.5" y="338.5" width="8" height="8" rx="1" fill="#fff" stroke="#8c8c8c" shape-rendering="geometricPrecision"/>
<rect x="50" y="343" width="7" height="3" fill="#ececec"/>
<rect x="51" y="342" width="5" height="1" fill="#2f4f9f"/>
<rect x="53" y="340" width="1" height="5" fill="#2f4f9f"/>
<rect x="49.5" y="354.5" width="8" height="8" rx="1" fill="#fff" stroke="#8c8c8c" shape-rendering="geometricPrecision"/>
<rect x="50" y="359" width="7" height="3" fill="#ececec"/>
<rect x="51" y="358" width="5" height="1" fill="#2f4f9f"/>
<rect x="53" y="356" width="1" height="5" fill="#2f4f9f"/>
<rect x="49.5" y="370.5" width="8" height="8" rx="1" fill="#fff" stroke="#8c8c8c" shape-rendering="geometricPrecision"/>
<rect x="50" y="375" width="7" height="3" fill="#ececec"/>
<rect x="51" y="374" width="5" height="1" fill="#2f4f9f"/>
<rect x="53" y="372" width="1" height="5" fill="#2f4f9f"/>
<rect x="30.5" y="418.5" width="8" height="8" rx="1" fill="#fff" stroke="#8c8c8c" shape-rendering="geometricPrecision"/>
<rect x="31" y="423" width="7" height="3" fill="#ececec"/>
<rect x="32" y="422" width="5" height="1" fill="#2f4f9f"/>
<rect x="34" y="420" width="1" height="5" fill="#2f4f9f"/>
<rect x="234.5" y="104.5" width="8" height="8" rx="1" fill="#fff" stroke="#8c8c8c" shape-rendering="geometricPrecision"/>
<rect x="235" y="109" width="7" height="3" fill="#ececec"/>
<rect x="236" y="108" width="5" height="1" fill="#2f4f9f"/>
<rect x="238" y="106" width="1" height="5" fill="#2f4f9f"/>
<rect x="234.5" y="120.5" width="8" height="8" rx="1" fill="#fff" stroke="#8c8c8c" shape-rendering="geometricPrecision"/>
<rect x="235" y="125" width="7" height="3" fill="#ececec"/>
<rect x="236" y="124" width="5" height="1" fill="#2f4f9f"/>
<rect x="238" y="122" width="1" height="5" fill="#2f4f9f"/>
<rect x="507.5" y="104.5" width="8" height="8" rx="1" fill="#fff" stroke="#8c8c8c" shape-rendering="geometricPrecision"/>
<rect x="508" y="109" width="7" height="3" fill="#ececec"/>
<rect x="509" y="108" width="5" height="1" fill="#2f4f9f"/>
<rect x="511" y="106" width="1" height="5" fill="#2f4f9f"/>
<rect x="779.5" y="104.5" width="8" height="8" rx="1" fill="#fff" stroke="#8c8c8c" shape-rendering="geometricPrecision"/>
<rect x="780" y="109" width="7" height="3" fill="#ececec"/>
<rect x="781" y="108" width="5" height="1" fill="#2f4f9f"/>
<rect x="783" y="106" width="1" height="5" fill="#2f4f9f"/>
<path d="M26.5,155 V145.5 L28.5,143.5 H31.5 L33.5,145.5 H38.5 V155" fill="url(#ck)" stroke="#808080" stroke-width="1" />
<rect x="27" y="146" width="1" height="9" fill="#fff"/>
<rect x="27" y="154" width="12" height="1" fill="#808080"/>
<rect x="27" y="155" width="14" height="1" fill="#000"/>
<rect x="39" y="146" width="1" height="10" fill="#000"/>
<rect x="27" y="146" width="1" height="8" fill="#fff"/>
<path d="M26.5,171 V161.5 L28.5,159.5 H31.5 L33.5,161.5 H38.5 V171" fill="url(#ck)" stroke="#808080" stroke-width="1" />
<rect x="27" y="162" width="1" height="9" fill="#fff"/>
<rect x="27" y="170" width="12" height="1" fill="#808080"/>
<rect x="27" y="171" width="14" height="1" fill="#000"/>
<rect x="39" y="162" width="1" height="10" fill="#000"/>
<rect x="27" y="162" width="1" height="8" fill="#fff"/>
<path d="M26.5,187 V177.5 L28.5,175.5 H31.5 L33.5,177.5 H38.5 V187" fill="url(#ck)" stroke="#808080" stroke-width="1" />
<rect x="27" y="178" width="1" height="9" fill="#fff"/>
<rect x="27" y="186" width="12" height="1" fill="#808080"/>
<rect x="27" y="187" width="14" height="1" fill="#000"/>
<rect x="39" y="178" width="1" height="10" fill="#000"/>
<rect x="27" y="178" width="1" height="8" fill="#fff"/>
<path d="M26.5,203 V193.5 L28.5,191.5 H31.5 L33.5,193.5 H38.5 V203" fill="url(#ck)" stroke="#808080" stroke-width="1" />
<rect x="27" y="194" width="1" height="9" fill="#fff"/>
<rect x="27" y="202" width="12" height="1" fill="#808080"/>
<rect x="27" y="203" width="14" height="1" fill="#000"/>
<rect x="39" y="194" width="1" height="10" fill="#000"/>
<rect x="27" y="194" width="1" height="8" fill="#fff"/>
<circle cx="36.7" cy="116.7" r="4.4" fill="#000" shape-rendering="geometricPrecision"/>
<rect x="35.400000000000006" y="110.49999999999999" width="2.6" height="2.9" fill="#000" transform="rotate(0.0 36.7 116.7)" shape-rendering="geometricPrecision"/>
<rect x="35.400000000000006" y="110.49999999999999" width="2.6" height="2.9" fill="#000" transform="rotate(45.0 36.7 116.7)" shape-rendering="geometricPrecision"/>
<rect x="35.400000000000006" y="110.49999999999999" width="2.6" height="2.9" fill="#000" transform="rotate(90.0 36.7 116.7)" shape-rendering="geometricPrecision"/>
<rect x="35.400000000000006" y="110.49999999999999" width="2.6" height="2.9" fill="#000" transform="rotate(135.0 36.7 116.7)" shape-rendering="geometricPrecision"/>
<rect x="35.400000000000006" y="110.49999999999999" width="2.6" height="2.9" fill="#000" transform="rotate(180.0 36.7 116.7)" shape-rendering="geometricPrecision"/>
<rect x="35.400000000000006" y="110.49999999999999" width="2.6" height="2.9" fill="#000" transform="rotate(225.0 36.7 116.7)" shape-rendering="geometricPrecision"/>
<rect x="35.400000000000006" y="110.49999999999999" width="2.6" height="2.9" fill="#000" transform="rotate(270.0 36.7 116.7)" shape-rendering="geometricPrecision"/>
<rect x="35.400000000000006" y="110.49999999999999" width="2.6" height="2.9" fill="#000" transform="rotate(315.0 36.7 116.7)" shape-rendering="geometricPrecision"/>
<circle cx="36" cy="116" r="4.4" fill="#808000" shape-rendering="geometricPrecision"/>
<rect x="34.8" y="109.89999999999999" width="2.4" height="2.8" fill="#808000" transform="rotate(0.0 36 116)" shape-rendering="geometricPrecision"/>
<rect x="34.8" y="109.89999999999999" width="2.4" height="2.8" fill="#808000" transform="rotate(45.0 36 116)" shape-rendering="geometricPrecision"/>
<rect x="34.8" y="109.89999999999999" width="2.4" height="2.8" fill="#808000" transform="rotate(90.0 36 116)" shape-rendering="geometricPrecision"/>
<rect x="34.8" y="109.89999999999999" width="2.4" height="2.8" fill="#808000" transform="rotate(135.0 36 116)" shape-rendering="geometricPrecision"/>
<rect x="34.8" y="109.89999999999999" width="2.4" height="2.8" fill="#808000" transform="rotate(180.0 36 116)" shape-rendering="geometricPrecision"/>
<rect x="34.8" y="109.89999999999999" width="2.4" height="2.8" fill="#808000" transform="rotate(225.0 36 116)" shape-rendering="geometricPrecision"/>
<rect x="34.8" y="109.89999999999999" width="2.4" height="2.8" fill="#808000" transform="rotate(270.0 36 116)" shape-rendering="geometricPrecision"/>
<rect x="34.8" y="109.89999999999999" width="2.4" height="2.8" fill="#808000" transform="rotate(315.0 36 116)" shape-rendering="geometricPrecision"/>
<rect x="35" y="115" width="2" height="2" fill="#fff"/>
<rect x="26" y="115" width="9" height="11" fill="#000"/>
<rect x="27" y="116" width="7" height="9" fill="#fff"/>
<rect x="28" y="118" width="1" height="2" fill="#008080"/>
<rect x="30" y="117" width="1" height="3" fill="#0000ff"/>
<rect x="32" y="118" width="1" height="2" fill="#808000"/>
<rect x="28" y="121" width="5" height="1" fill="#808080"/>
<rect x="28" y="123" width="5" height="1" fill="#808080"/>
<circle cx="36.7" cy="132.7" r="4.4" fill="#000" shape-rendering="geometricPrecision"/>
<rect x="35.400000000000006" y="126.49999999999997" width="2.6" height="2.9" fill="#000" transform="rotate(0.0 36.7 132.7)" shape-rendering="geometricPrecision"/>
<rect x="35.400000000000006" y="126.49999999999997" width="2.6" height="2.9" fill="#000" transform="rotate(45.0 36.7 132.7)" shape-rendering="geometricPrecision"/>
<rect x="35.400000000000006" y="126.49999999999997" width="2.6" height="2.9" fill="#000" transform="rotate(90.0 36.7 132.7)" shape-rendering="geometricPrecision"/>
<rect x="35.400000000000006" y="126.49999999999997" width="2.6" height="2.9" fill="#000" transform="rotate(135.0 36.7 132.7)" shape-rendering="geometricPrecision"/>
<rect x="35.400000000000006" y="126.49999999999997" width="2.6" height="2.9" fill="#000" transform="rotate(180.0 36.7 132.7)" shape-rendering="geometricPrecision"/>
<rect x="35.400000000000006" y="126.49999999999997" width="2.6" height="2.9" fill="#000" transform="rotate(225.0 36.7 132.7)" shape-rendering="geometricPrecision"/>
<rect x="35.400000000000006" y="126.49999999999997" width="2.6" height="2.9" fill="#000" transform="rotate(270.0 36.7 132.7)" shape-rendering="geometricPrecision"/>
<rect x="35.400000000000006" y="126.49999999999997" width="2.6" height="2.9" fill="#000" transform="rotate(315.0 36.7 132.7)" shape-rendering="geometricPrecision"/>
<circle cx="36" cy="132" r="4.4" fill="#808000" shape-rendering="geometricPrecision"/>
<rect x="34.8" y="125.89999999999999" width="2.4" height="2.8" fill="#808000" transform="rotate(0.0 36 132)" shape-rendering="geometricPrecision"/>
<rect x="34.8" y="125.89999999999999" width="2.4" height="2.8" fill="#808000" transform="rotate(45.0 36 132)" shape-rendering="geometricPrecision"/>
<rect x="34.8" y="125.89999999999999" width="2.4" height="2.8" fill="#808000" transform="rotate(90.0 36 132)" shape-rendering="geometricPrecision"/>
<rect x="34.8" y="125.89999999999999" width="2.4" height="2.8" fill="#808000" transform="rotate(135.0 36 132)" shape-rendering="geometricPrecision"/>
<rect x="34.8" y="125.89999999999999" width="2.4" height="2.8" fill="#808000" transform="rotate(180.0 36 132)" shape-rendering="geometricPrecision"/>
<rect x="34.8" y="125.89999999999999" width="2.4" height="2.8" fill="#808000" transform="rotate(225.0 36 132)" shape-rendering="geometricPrecision"/>
<rect x="34.8" y="125.89999999999999" width="2.4" height="2.8" fill="#808000" transform="rotate(270.0 36 132)" shape-rendering="geometricPrecision"/>
<rect x="34.8" y="125.89999999999999" width="2.4" height="2.8" fill="#808000" transform="rotate(315.0 36 132)" shape-rendering="geometricPrecision"/>
<rect x="35" y="131" width="2" height="2" fill="#fff"/>
<path d="M26.5,130.5 H32.5 V140.5 H28.5 L26.5,138.5 Z" fill="#d0d0d0" stroke="#000" stroke-width="1" />
<rect x="28" y="132" width="4" height="8" fill="#e4e4e4"/>
<rect x="27" y="131" width="1" height="8" fill="#a8a8a8"/>
<rect x="30" y="134" width="2" height="2" fill="#ff0000"/>
<rect x="28" y="137" width="4" height="1" fill="#b0b0b0"/>
<rect x="49" y="207" width="12" height="14" fill="#808080"/>
<rect x="50" y="208" width="10" height="12" fill="#fff"/>
<rect x="51" y="214" width="8" height="1" fill="#c8c8c8"/>
<rect x="51" y="216" width="8" height="1" fill="#c8c8c8"/>
<rect x="51" y="218" width="8" height="1" fill="#c8c8c8"/>
<rect x="51" y="210" width="7" height="2" fill="#000"/>
<rect x="52" y="209" width="2" height="4" fill="#000"/>
<rect x="52" y="210" width="2" height="2" fill="#00ffff"/>
<rect x="59" y="208" width="1" height="1" fill="#808080"/>
<rect x="49" y="239" width="12" height="14" fill="#000"/>
<rect x="50" y="240" width="10" height="12" fill="#fff"/>
<rect x="51" y="246" width="8" height="1" fill="#808080"/>
<rect x="51" y="248" width="8" height="1" fill="#808080"/>
<rect x="51" y="250" width="8" height="1" fill="#808080"/>
<rect x="51" y="244" width="2" height="1" fill="#808080"/>
<rect x="57" y="244" width="2" height="1" fill="#808080"/>
<rect x="54" y="242" width="2" height="3" fill="#a0a0a0"/>
<rect x="59" y="240" width="1" height="1" fill="#000"/>
<path d="M47.5,239.5 H46.5 V242.5 L45.5,243 L46.5,243.5 V246.5 H47.5" fill="none" stroke="#0000ff" stroke-width="1" />
<rect x="68" y="351" width="12" height="14" fill="#808080"/>
<rect x="69" y="352" width="10" height="12" fill="#fff"/>
<rect x="70" y="358" width="8" height="1" fill="#c8c8c8"/>
<rect x="70" y="360" width="8" height="1" fill="#c8c8c8"/>
<rect x="70" y="362" width="8" height="1" fill="#c8c8c8"/>
<rect x="70" y="356" width="2" height="1" fill="#c0c0c0"/>
<rect x="76" y="356" width="2" height="1" fill="#c0c0c0"/>
<rect x="73" y="354" width="2" height="3" fill="#c8c8c8"/>
<rect x="75" y="350" width="6" height="5" fill="#fff"/>
<rect x="76" y="350" width="1" height="1" fill="#000"/>
<rect x="79" y="350" width="1" height="1" fill="#000"/>
<rect x="77" y="351" width="1" height="1" fill="#000"/>
<rect x="78" y="351" width="1" height="1" fill="#000"/>
<rect x="77" y="352" width="1" height="1" fill="#000"/>
<rect x="78" y="352" width="1" height="1" fill="#000"/>
<rect x="76" y="353" width="1" height="1" fill="#000"/>
<rect x="79" y="353" width="1" height="1" fill="#000"/>
<rect x="68" y="367" width="12" height="14" fill="#808080"/>
<rect x="69" y="368" width="10" height="12" fill="#fff"/>
<rect x="70" y="374" width="8" height="1" fill="#c8c8c8"/>
<rect x="70" y="376" width="8" height="1" fill="#c8c8c8"/>
<rect x="70" y="378" width="8" height="1" fill="#c8c8c8"/>
<rect x="70" y="372" width="2" height="1" fill="#c0c0c0"/>
<rect x="76" y="372" width="2" height="1" fill="#c0c0c0"/>
<rect x="73" y="370" width="2" height="3" fill="#c8c8c8"/>
<rect x="75" y="366" width="6" height="5" fill="#fff"/>
<rect x="76" y="366" width="1" height="1" fill="#000"/>
<rect x="79" y="366" width="1" height="1" fill="#000"/>
<rect x="77" y="367" width="1" height="1" fill="#000"/>
<rect x="78" y="367" width="1" height="1" fill="#000"/>
<rect x="77" y="368" width="1" height="1" fill="#000"/>
<rect x="78" y="368" width="1" height="1" fill="#000"/>
<rect x="76" y="369" width="1" height="1" fill="#000"/>
<rect x="79" y="369" width="1" height="1" fill="#000"/>
<rect x="49" y="399" width="12" height="14" fill="#808080"/>
<rect x="50" y="400" width="10" height="12" fill="#fff"/>
<rect x="51" y="406" width="8" height="1" fill="#c8c8c8"/>
<rect x="51" y="408" width="8" height="1" fill="#c8c8c8"/>
<rect x="51" y="410" width="8" height="1" fill="#c8c8c8"/>
<rect x="51" y="404" width="2" height="1" fill="#c0c0c0"/>
<rect x="57" y="404" width="2" height="1" fill="#c0c0c0"/>
<rect x="54" y="402" width="2" height="3" fill="#c8c8c8"/>
<rect x="56" y="398" width="6" height="5" fill="#fff"/>
<rect x="57" y="398" width="1" height="1" fill="#000"/>
<rect x="60" y="398" width="1" height="1" fill="#000"/>
<rect x="58" y="399" width="1" height="1" fill="#000"/>
<rect x="59" y="399" width="1" height="1" fill="#000"/>
<rect x="58" y="400" width="1" height="1" fill="#000"/>
<rect x="59" y="400" width="1" height="1" fill="#000"/>
<rect x="57" y="401" width="1" height="1" fill="#000"/>
<rect x="60" y="401" width="1" height="1" fill="#000"/>
<path d="M49.5,223.5 H57.5 L60.5,226.5 V236.5 H49.5 Z" fill="#fff" stroke="#8c8cc4" stroke-width="1" />
<path d="M57.5,223.5 V226.5 H60.5" fill="none" stroke="#8c8cc4" stroke-width="1" />
<rect x="59" y="229" width="1" height="7" fill="#b8d4f4"/>
<rect x="50" y="235" width="10" height="1" fill="#b8d4f4"/>
<rect x="46" y="233" width="11" height="1" fill="#9c9cc8"/>
<rect x="57" y="229" width="1" height="4" fill="#9c9cc8"/>
<rect x="45" y="228" width="12" height="5" fill="#4468d0"/>
<rect x="46" y="229" width="10" height="3" fill="#b4ccf0"/>
<rect x="46" y="231" width="10" height="1" fill="#fff"/>
<rect x="58" y="229" width="1" height="1" fill="#a0a0d0"/>
<rect x="58" y="231" width="1" height="1" fill="#a0a0d0"/>
<path d="M68.5,255.5 H76.5 L79.5,258.5 V268.5 H68.5 Z" fill="#fff" stroke="#8c8cc4" stroke-width="1" />
<path d="M76.5,255.5 V258.5 H79.5" fill="none" stroke="#8c8cc4" stroke-width="1" />
<rect x="78" y="261" width="1" height="7" fill="#b8d4f4"/>
<rect x="69" y="267" width="10" height="1" fill="#b8d4f4"/>
<rect x="65" y="265" width="11" height="1" fill="#9c9cc8"/>
<rect x="76" y="261" width="1" height="4" fill="#9c9cc8"/>
<rect x="64" y="260" width="12" height="5" fill="#4468d0"/>
<rect x="65" y="261" width="10" height="3" fill="#b4ccf0"/>
<rect x="65" y="263" width="10" height="1" fill="#fff"/>
<rect x="77" y="261" width="1" height="1" fill="#a0a0d0"/>
<rect x="77" y="263" width="1" height="1" fill="#a0a0d0"/>
<path d="M68.5,335.5 H76.5 L79.5,338.5 V348.5 H68.5 Z" fill="#fff" stroke="#8c8cc4" stroke-width="1" />
<path d="M76.5,335.5 V338.5 H79.5" fill="none" stroke="#8c8cc4" stroke-width="1" />
<rect x="78" y="341" width="1" height="7" fill="#b8d4f4"/>
<rect x="69" y="347" width="10" height="1" fill="#b8d4f4"/>
<rect x="65" y="345" width="11" height="1" fill="#9c9cc8"/>
<rect x="76" y="341" width="1" height="4" fill="#9c9cc8"/>
<rect x="64" y="340" width="12" height="5" fill="#4468d0"/>
<rect x="65" y="341" width="10" height="3" fill="#b4ccf0"/>
<rect x="65" y="343" width="10" height="1" fill="#fff"/>
<rect x="77" y="341" width="1" height="1" fill="#a0a0d0"/>
<rect x="77" y="343" width="1" height="1" fill="#a0a0d0"/>
<path d="M68.5,383.5 H76.5 L79.5,386.5 V396.5 H68.5 Z" fill="#fff" stroke="#8c8cc4" stroke-width="1" />
<path d="M76.5,383.5 V386.5 H79.5" fill="none" stroke="#8c8cc4" stroke-width="1" />
<rect x="78" y="389" width="1" height="7" fill="#b8d4f4"/>
<rect x="69" y="395" width="10" height="1" fill="#b8d4f4"/>
<rect x="65" y="393" width="11" height="1" fill="#9c9cc8"/>
<rect x="76" y="389" width="1" height="4" fill="#9c9cc8"/>
<rect x="64" y="388" width="12" height="5" fill="#4468d0"/>
<rect x="65" y="389" width="10" height="3" fill="#b4ccf0"/>
<rect x="65" y="391" width="10" height="1" fill="#fff"/>
<rect x="77" y="389" width="1" height="1" fill="#a0a0d0"/>
<rect x="77" y="391" width="1" height="1" fill="#a0a0d0"/>
<path d="M49.5,415.5 H57.5 L60.5,418.5 V428.5 H49.5 Z" fill="#fff" stroke="#8c8cc4" stroke-width="1" />
<path d="M57.5,415.5 V418.5 H60.5" fill="none" stroke="#8c8cc4" stroke-width="1" />
<rect x="59" y="421" width="1" height="7" fill="#b8d4f4"/>
<rect x="50" y="427" width="10" height="1" fill="#b8d4f4"/>
<rect x="46" y="425" width="11" height="1" fill="#9c9cc8"/>
<rect x="57" y="421" width="1" height="4" fill="#9c9cc8"/>
<rect x="45" y="420" width="12" height="5" fill="#4468d0"/>
<rect x="46" y="421" width="10" height="3" fill="#b4ccf0"/>
<rect x="46" y="423" width="10" height="1" fill="#fff"/>
<rect x="58" y="421" width="1" height="1" fill="#a0a0d0"/>
<rect x="58" y="423" width="1" height="1" fill="#a0a0d0"/>
<rect x="91" y="275" width="10" height="9" fill="#3878c8"/>
<rect x="92" y="276" width="8" height="7" fill="#fff"/>
<rect x="84" y="278" width="1" height="1" fill="#808080"/>
<rect x="84" y="294" width="1" height="1" fill="#808080"/>
<rect x="86" y="278" width="1" height="1" fill="#808080"/>
<rect x="86" y="294" width="1" height="1" fill="#808080"/>
<rect x="88" y="278" width="1" height="1" fill="#808080"/>
<rect x="88" y="294" width="1" height="1" fill="#808080"/>
<rect x="84" y="326" width="1" height="1" fill="#808080"/>
<rect x="86" y="326" width="1" height="1" fill="#808080"/>
<rect x="92" y="289" width="11" height="10" fill="#9c8c88"/>
<rect x="93" y="290" width="9" height="8" fill="#1c9cc0"/>
<rect x="94" y="291" width="1" height="3" fill="#ffe000"/>
<rect x="93" y="292" width="3" height="1" fill="#ffe000"/>
<polygon points="96.5,294.5 99,292 101.5,294.5" fill="#fff" shape-rendering="geometricPrecision"/>
<rect x="97" y="294" width="4" height="3" fill="#fff"/>
<rect x="98.5" y="295.5" width="1" height="1.5" fill="#1c9cc0"/>
<rect x="107" y="302" width="10" height="1" fill="#000"/>
<rect x="107" y="302" width="1" height="11" fill="#000"/>
<rect x="107" y="312" width="11" height="1" fill="#000"/>
<rect x="117" y="303" width="1" height="10" fill="#000"/>
<rect x="108" y="303" width="9" height="9" fill="#fff"/>
<rect x="116" y="303" width="1" height="1" fill="#fff"/>
<rect x="115" y="303" width="1" height="2" fill="#000"/>
<rect x="115" y="304" width="2" height="1" fill="#000"/>
<rect x="109" y="304" width="5" height="1" fill="#000"/>
<rect x="114" y="306" width="2" height="1" fill="#000"/>
<rect x="115" y="308" width="1" height="1" fill="#000"/>
<rect x="114" y="310" width="2" height="1" fill="#000"/>
<rect x="109" y="306" width="1" height="3" fill="#800000"/>
<rect x="109" y="308" width="5" height="1" fill="#800000"/>
<rect x="111" y="306" width="1" height="5" fill="#800000"/>
<rect x="112" y="307" width="1" height="3" fill="#800000"/>
<rect x="105" y="308" width="2" height="1" fill="#000"/>
<rect x="105" y="308" width="1" height="4" fill="#000"/>
<rect x="104" y="312" width="1" height="1" fill="#000"/>
<rect x="103" y="313" width="1" height="1" fill="#000"/>
<rect x="108" y="313" width="3" height="1" fill="#000"/>
<rect x="107" y="314" width="3" height="1" fill="#c0c0c0"/>
<rect x="116" y="313" width="1" height="2" fill="#000"/>
<rect x="113" y="314" width="4" height="1" fill="#000"/>
<rect x="112" y="315" width="1" height="1" fill="#000"/>
<rect x="110" y="316" width="2" height="1" fill="#000"/>
<rect x="90" y="325" width="13" height="5" fill="#c8c8c8"/>
<rect x="89" y="324" width="13" height="5" fill="#808080"/>
<rect x="90" y="325" width="11" height="3" fill="#fff"/>
<rect x="93" y="325" width="1" height="3" fill="#808080"/>
<rect x="91" y="326" width="1" height="1" fill="#c0c0c0"/>
<rect x="95" y="326" width="5" height="1" fill="#c0c0c0"/>
<rect x="101" y="318" width="1" height="1" fill="#000"/>
<rect x="104" y="318" width="1" height="1" fill="#000"/>
<rect x="102" y="319" width="1" height="1" fill="#000"/>
<rect x="103" y="319" width="1" height="1" fill="#000"/>
<rect x="102" y="320" width="1" height="1" fill="#000"/>
<rect x="103" y="320" width="1" height="1" fill="#000"/>
<rect x="101" y="321" width="1" height="1" fill="#000"/>
<rect x="104" y="321" width="1" height="1" fill="#000"/>
<path d="M252.5,101.5 H258.5 L260.5,103.5 V109.5 H252.5 Z" fill="#fff" stroke="#5a82dc" stroke-width="1" />
<rect x="254" y="107" width="5" height="2" fill="#d8d8d8"/>
<rect x="255" y="103" width="2" height="2" fill="#ff0000"/>
<rect x="257" y="103" width="2" height="2" fill="#008000"/>
<rect x="256" y="104" width="2" height="2" fill="#0000c0"/>
<rect x="251" y="110" width="13" height="5" fill="#d0d0d0"/>
<rect x="250" y="109" width="13" height="5" fill="#5a82dc"/>
<rect x="251" y="110" width="11" height="3" fill="#fff"/>
<rect x="254" y="110" width="1" height="3" fill="#5a82dc"/>
<rect x="252" y="111" width="1" height="1" fill="#5a82dc"/>
<rect x="256" y="111" width="5" height="1" fill="#5a82dc"/>
<rect x="252" y="118" width="9" height="12" rx="2.5" ry="2" fill="url(#gold)" shape-rendering="geometricPrecision"/>
<path d="M252.3,120.5 Q256.5,122.2 260.7,120.5" fill="none" stroke="#b08010" stroke-width="0.8" shape-rendering="geometricPrecision"/>
<path d="M521.5,111.5 V102.5 L523.5,100.5 H527.5 L529.5,102.5 H534.5 V106" fill="url(#ckw)" stroke="#909090" stroke-width="1" />
<rect x="522" y="103" width="2" height="8" fill="#fff"/>
<rect x="529" y="103" width="5" height="3" fill="#fff"/>
<rect x="522" y="111" width="4" height="1" fill="#909090"/>
<path d="M793.5,111.5 V102.5 L795.5,100.5 H799.5 L801.5,102.5 H806.5 V106" fill="url(#ckw)" stroke="#909090" stroke-width="1" />
<rect x="794" y="103" width="2" height="8" fill="#fff"/>
<rect x="801" y="103" width="5" height="3" fill="#fff"/>
<rect x="794" y="111" width="4" height="1" fill="#909090"/>
<circle cx="531.2" cy="109.8" r="4.4" fill="#000" shape-rendering="geometricPrecision"/>
<rect x="529.8000000000001" y="103.49999999999999" width="2.8" height="3.0" fill="#000" transform="rotate(0.0 531.2 109.8)" shape-rendering="geometricPrecision"/>
<rect x="529.8000000000001" y="103.49999999999999" width="2.8" height="3.0" fill="#000" transform="rotate(45.0 531.2 109.8)" shape-rendering="geometricPrecision"/>
<rect x="529.8000000000001" y="103.49999999999999" width="2.8" height="3.0" fill="#000" transform="rotate(90.0 531.2 109.8)" shape-rendering="geometricPrecision"/>
<rect x="529.8000000000001" y="103.49999999999999" width="2.8" height="3.0" fill="#000" transform="rotate(135.0 531.2 109.8)" shape-rendering="geometricPrecision"/>
<rect x="529.8000000000001" y="103.49999999999999" width="2.8" height="3.0" fill="#000" transform="rotate(180.0 531.2 109.8)" shape-rendering="geometricPrecision"/>
<rect x="529.8000000000001" y="103.49999999999999" width="2.8" height="3.0" fill="#000" transform="rotate(225.0 531.2 109.8)" shape-rendering="geometricPrecision"/>
<rect x="529.8000000000001" y="103.49999999999999" width="2.8" height="3.0" fill="#000" transform="rotate(270.0 531.2 109.8)" shape-rendering="geometricPrecision"/>
<rect x="529.8000000000001" y="103.49999999999999" width="2.8" height="3.0" fill="#000" transform="rotate(315.0 531.2 109.8)" shape-rendering="geometricPrecision"/>
<circle cx="530.5" cy="109.0" r="4.4" fill="#808000" shape-rendering="geometricPrecision"/>
<rect x="529.25" y="102.79999999999998" width="2.5" height="2.9" fill="#808000" transform="rotate(0.0 530.5 109.0)" shape-rendering="geometricPrecision"/>
<rect x="529.25" y="102.79999999999998" width="2.5" height="2.9" fill="#808000" transform="rotate(45.0 530.5 109.0)" shape-rendering="geometricPrecision"/>
<rect x="529.25" y="102.79999999999998" width="2.5" height="2.9" fill="#808000" transform="rotate(90.0 530.5 109.0)" shape-rendering="geometricPrecision"/>
<rect x="529.25" y="102.79999999999998" width="2.5" height="2.9" fill="#808000" transform="rotate(135.0 530.5 109.0)" shape-rendering="geometricPrecision"/>
<rect x="529.25" y="102.79999999999998" width="2.5" height="2.9" fill="#808000" transform="rotate(180.0 530.5 109.0)" shape-rendering="geometricPrecision"/>
<rect x="529.25" y="102.79999999999998" width="2.5" height="2.9" fill="#808000" transform="rotate(225.0 530.5 109.0)" shape-rendering="geometricPrecision"/>
<rect x="529.25" y="102.79999999999998" width="2.5" height="2.9" fill="#808000" transform="rotate(270.0 530.5 109.0)" shape-rendering="geometricPrecision"/>
<rect x="529.25" y="102.79999999999998" width="2.5" height="2.9" fill="#808000" transform="rotate(315.0 530.5 109.0)" shape-rendering="geometricPrecision"/>
<rect x="529" y="107.5" width="2" height="3" fill="#000"/>
<rect x="530" y="108.5" width="2" height="2" fill="#ffff40"/>
<path d="M799,104 H802 V106 H804 V104 H807 V107 H809 V111 H807 V115 H804 V113 H802 V115 H799 V111 H797 V107 H799 Z" fill="#000" transform="translate(1,1)"/>
<path d="M799,104 H802 V106 H804 V104 H807 V107 H809 V111 H807 V115 H804 V113 H802 V115 H799 V111 H797 V107 H799 Z" fill="#0000ff"/>
<rect x="4" y="780" width="194" height="15" fill="#f0f0f0"/>
<rect x="21" y="780" width="108" height="15" fill="#cdcdcd"/>
<polyline points="14,784 10.5,787.5 14,791" fill="none" stroke="#404040" stroke-width="2" shape-rendering="geometricPrecision"/>
<polyline points="188,784 191.5,787.5 188,791" fill="none" stroke="#404040" stroke-width="2" shape-rendering="geometricPrecision"/>
<rect x="209" y="778" width="794" height="17" fill="#f0f0f0"/>
<rect x="226" y="778" width="36" height="17" fill="#cdcdcd"/>
<polyline points="219,783 215.5,786.5 219,790" fill="none" stroke="#404040" stroke-width="2" shape-rendering="geometricPrecision"/>
<polyline points="992,783 995.5,786.5 992,790" fill="none" stroke="#404040" stroke-width="2" shape-rendering="geometricPrecision"/>
<rect x="1003" y="400" width="17" height="396" fill="#f0f0f0"/>
<polyline points="1007.2,410.8 1010.5,407.5 1013.8,410.8" fill="none" stroke="#b4b4b4" stroke-width="2" shape-rendering="geometricPrecision"/>
<polyline points="1007.2,768.2 1010.5,771.5 1013.8,768.2" fill="none" stroke="#b4b4b4" stroke-width="2" shape-rendering="geometricPrecision"/>
<rect x="1014" y="785" width="2" height="2" fill="#bfbfbf"/>
<rect x="1011" y="788" width="2" height="2" fill="#bfbfbf"/>
<rect x="1014" y="788" width="2" height="2" fill="#bfbfbf"/>
<rect x="1008" y="791" width="2" height="2" fill="#bfbfbf"/>
<rect x="1011" y="791" width="2" height="2" fill="#bfbfbf"/>
<rect x="1014" y="791" width="2" height="2" fill="#bfbfbf"/>
<rect x="903" y="16" width="10" height="1" fill="#c8c8c8"/>
<rect x="947.5" y="11.5" width="9" height="9" fill="none" stroke="#000" stroke-width="1"/>
<polyline points="993.5,11 1003.5,21" fill="none" stroke="#000" stroke-width="1.1" shape-rendering="geometricPrecision"/>
<polyline points="1003.5,11 993.5,21" fill="none" stroke="#000" stroke-width="1.1" shape-rendering="geometricPrecision"/>
<path d="M14.5,9.5 H21.5 L24.5,12.5 V22.5 H14.5 Z" fill="#e4ecf8" stroke="#9cb4dc" stroke-width="1" />
<path d="M21.5,9.5 V12.5 H24.5" fill="#fff" stroke="#9cb4dc" stroke-width="1" />
<polygon points="15.8,16.4 20,12.4 23.2,16.3 19,20.3" fill="url(#grn)" shape-rendering="geometricPrecision"/>
<path d="M11,15.8 C14,16 16.8,17 17.2,19.5 L18.4,18.6 L17.8,22.3 L14.2,21.8 L15.4,20.9 C15,19 13.6,17 11,16.6 Z" fill="#3060d8" stroke="none" stroke-width="1" shape-rendering="geometricPrecision"/>
</svg>
</body></html>
